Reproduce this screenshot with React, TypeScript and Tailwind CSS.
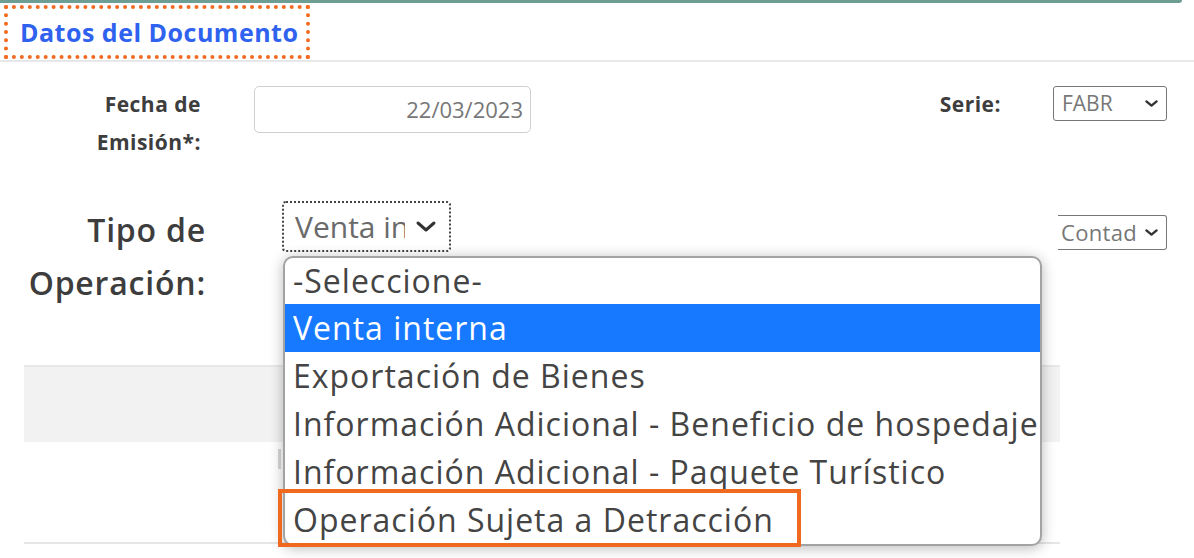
import type { ReactNode } from 'react';

const OPCIONES = [
  '-Seleccione-',
  'Venta interna',
  'Exportación de Bienes',
  'Información Adicional - Beneficio de hospedaje',
  'Información Adicional - Paquete Turístico',
  'Operación Sujeta a Detracción',
];

function Chevron({ w = 15, h = 9, stroke = 2.4 }: { w?: number; h?: number; stroke?: number }) {
  return (
    <svg width={w} height={h} viewBox={`0 0 ${w} ${h}`} fill="none" className="shrink-0">
      <path
        d={`M${stroke} ${stroke} L${w / 2} ${h - stroke} L${w - stroke} ${stroke}`}
        stroke="#333"
        strokeWidth={stroke}
        strokeLinecap="round"
        strokeLinejoin="round"
      />
    </svg>
  );
}

function Label({ children, className }: { children: ReactNode; className: string }) {
  return <div className={`text-right text-[#3d3d3d] whitespace-nowrap ${className}`}>{children}</div>;
}

export default function App() {
  return (
    <div className="relative w-[1194px] h-[558px] overflow-hidden bg-white font-['Open_Sans',sans-serif] text-[#444]">
      <div className="h-[3px] bg-[#6e9d94] mr-[12px] rounded-br-[14px]" />

      {/* encabezado */}
      <div className="h-[59px] border-b-2 border-[#e8e8e8] pt-[2px] pl-[4px]">
        <div className="inline-flex h-[54px] items-center border-4 border-dotted border-[#f26a1f] pl-[12px] pr-[8px]">
          <h2 className="text-[25px] font-bold leading-none tracking-[0.5px] text-[#2f62ee]">Datos del Documento</h2>
        </div>
      </div>

      {/* fila 1 */}
      <div className="flex items-start mt-[23px]">
        <Label className="w-[201px] text-[21px] font-bold leading-[38px] tracking-[0.5px]">
          Fecha de
          <br />
          Emisión*:
        </Label>
        <div className="ml-[53px] mt-[1px] w-[277px] h-[47px] border border-[#d0d0d0] rounded-[5px] flex items-center justify-end pr-[7px] text-[22px] text-[#777]">
          22/03/2023
        </div>
        <div className="ml-auto mr-[27px] flex items-start">
          <Label className="text-[21px] font-bold leading-[38px] tracking-[0.5px]">Serie:</Label>
          <div className="ml-[52px] mt-[1px] w-[114px] h-[35px] border border-[#777] rounded-[3px] flex items-center pl-[8px] pr-[7px] text-[21px] text-[#777]">
            <span className="flex-1">FABR</span>
            <Chevron />
          </div>
        </div>
      </div>

      {/* fila 2 */}
      <div className="flex items-start mt-[42px]">
        <Label className="w-[206px] text-[32px] leading-[53px] font-semibold tracking-[0.8px]">
          Tipo de
          <br />
          Operación:
        </Label>
        <div className="ml-[76px] -mt-[2px] w-[169px] h-[51px] border-2 border-dotted border-[#444] rounded-[4px] flex items-center pl-[11px] pr-[12px] text-[30px] text-[#6a6a6a]">
          <span className="w-[110px] overflow-hidden whitespace-nowrap">Venta interna</span>
          <span className="flex-1" />
          <Chevron w={22} h={13} stroke={3} />
        </div>
        <div className="ml-auto mr-[27px] mt-[12px] w-[109px] h-[35px] border border-l-0 border-[#777] rounded-r-[3px] flex items-center pl-[3px] pr-[7px] text-[22px] tracking-[0.3px] text-[#777]">
          <span className="flex-1">Contad</span>
          <Chevron />
        </div>
      </div>

      {/* fondo de la tabla */}
      <div className="ml-[24px] w-[1036px] mt-[56px] h-[77px] bg-[#f2f2f2] border-t-2 border-[#e8e8e8]" />
      <div className="ml-[24px] w-[1036px] h-[100px] flex items-start">
        <div className="ml-[254px] mt-[7px] w-[3px] h-[20px] bg-[#d8d8d8]" />
      </div>
      <div className="ml-[24px] w-[1036px] h-[2px] bg-[#e6e6e6]" />

      {/* lista desplegada */}
      <div className="absolute left-[283px] top-[256px] w-[759px] h-[290px] bg-white border-2 border-[#a3a3a3] rounded-[10px] overflow-hidden shadow-[0_2px_14px_rgba(0,0,0,0.28)]">
        {OPCIONES.map((op, i) => (
          <div
            key={op}
            className={`${i === 0 ? 'h-[46px]' : 'h-[48px]'} flex items-center pl-[8px] text-[32px] tracking-[1px] whitespace-nowrap ${
              i === 1 ? 'bg-[#1679ff] text-white' : 'text-[#444]'
            }`}
          >
            {op}
          </div>
        ))}
      </div>

      {/* resaltado */}
      <div className="absolute left-[278px] top-[489px] w-[523px] h-[58px] border-4 border-[#ef6a1f]" />
    </div>
  );
}
